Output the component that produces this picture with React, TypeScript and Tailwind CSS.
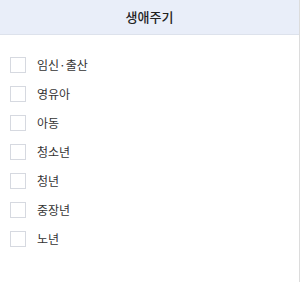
const items = ['임신·출산', '영유아', '아동', '청소년', '청년', '중장년', '노년']

export default function App() {
  return (
    <div className="w-[300px] h-[282px] bg-white border-r border-[#dcdcdc] font-['Noto_Sans_CJK_KR',sans-serif]">
      <div className="h-[35px] bg-[#e9eef9] border-b border-[#dde2ec] flex items-center justify-center">
        <span className="text-[13px] font-medium text-[#222]">생애주기</span>
      </div>
      <ul className="pt-[22px] px-[10px] flex flex-col gap-[13px]">
        {items.map((item) => (
          <li key={item} className="flex items-center h-4">
            <span className="w-4 h-4 border border-[#d6d9e0] bg-white" />
            <span className="ml-[11px] text-[12px] text-[#333]">{item}</span>
          </li>
        ))}
      </ul>
    </div>
  )
}
